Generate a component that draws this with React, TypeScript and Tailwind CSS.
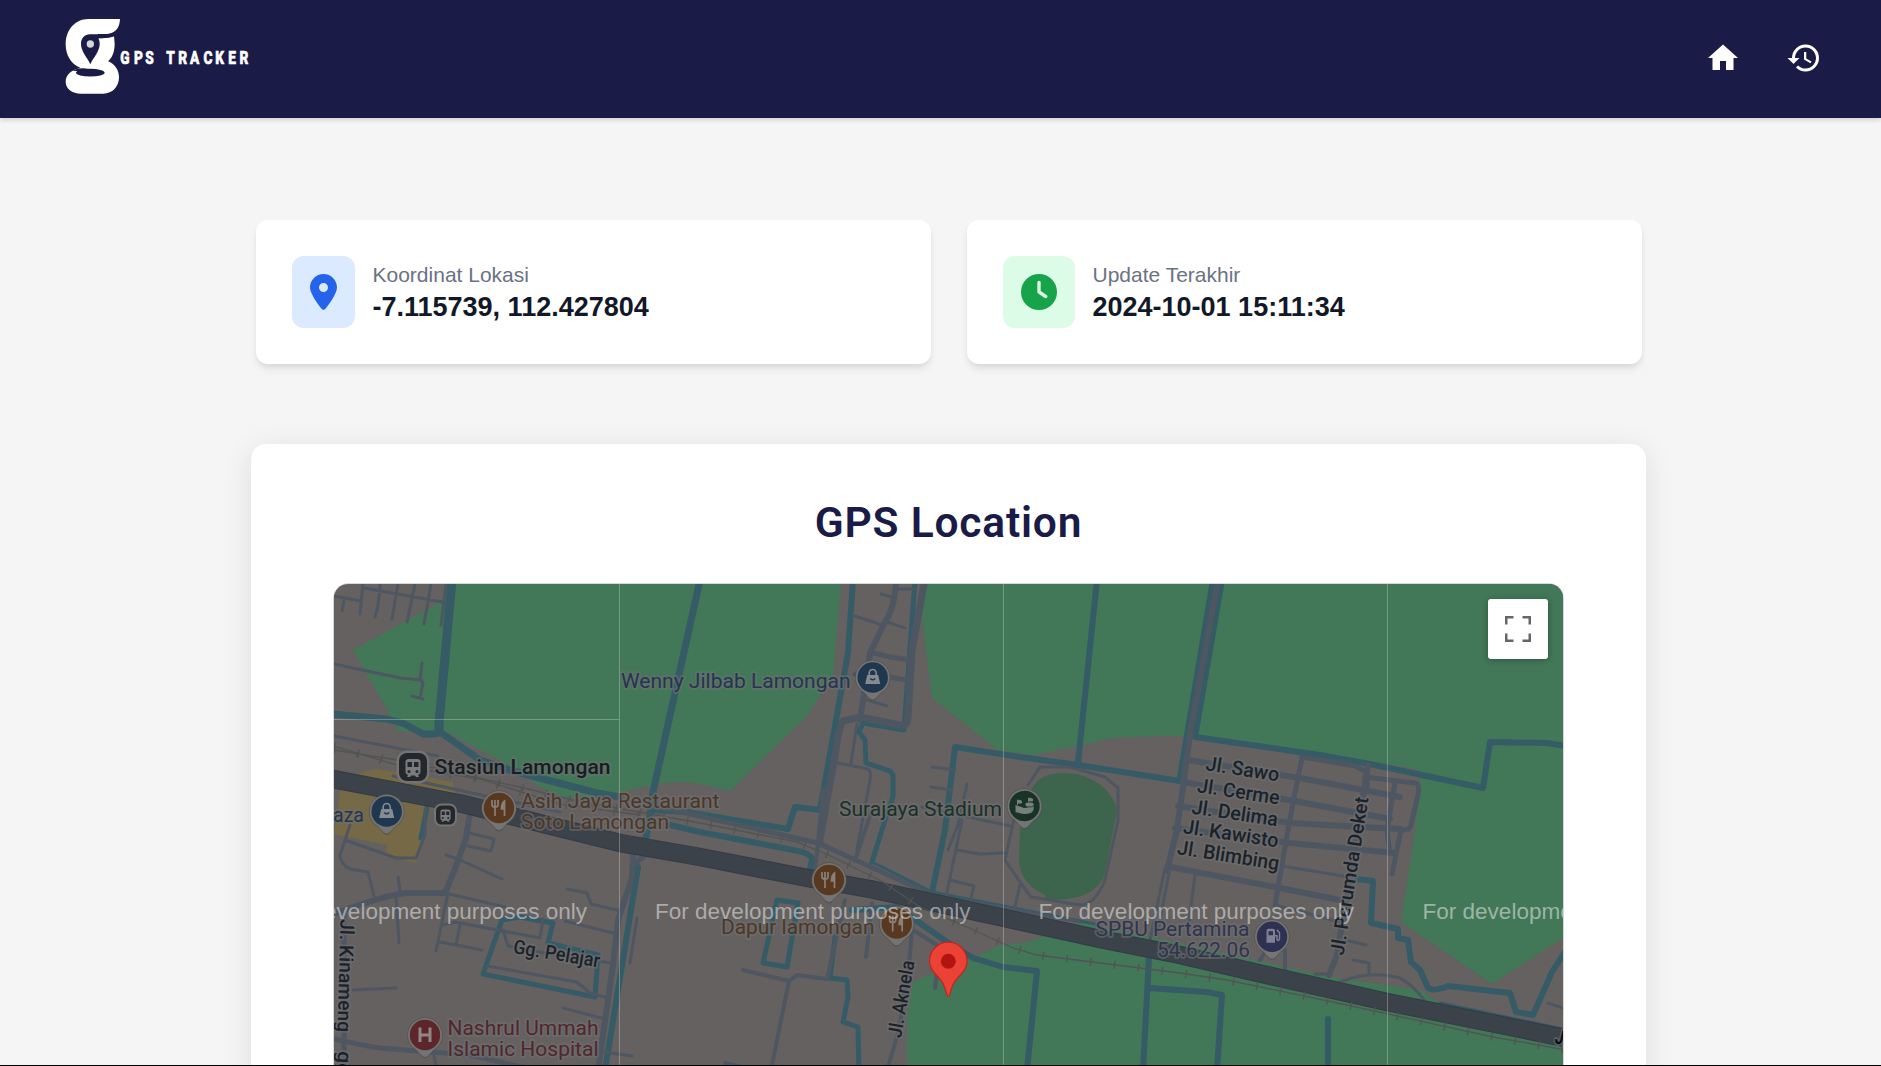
import React from "react";
import { MdHome, MdHistory } from "react-icons/md";
import { FaLocationDot, FaClock } from "react-icons/fa6";

const CANALS: [string, number][] = [
  ["M452 580L439 723V732", 9],
  ["M330 714L387 719L405 724L423 734H435L440 732L480 760L513 771L547 780L597 793L620 797", 7],
  ["M700 580L653 792L650 815L646 838", 7],
  ["M853 580L848 653L820 810L795 807L788 829L687 812L650 810", 6],
  ["M670 825L700 832L793 850Q812 853 812 860L809 874", 6],
  ["M915 580L904 730L863 723L859 732L865 740L866 763L890 771L893 775V797L885 820L872 862", 5],
  ["M932 892L945 830L955 747L1020 757L1078 765L1180 781", 6],
  ["M1097 580L1078 763", 6],
  ["M1213 580L1180 777", 6],
  ["M1222 580L1195 737L1320 755L1370 764L1417 774L1483 788L1490 742L1547 743L1566 746", 6],
  ["M638 867L605 1070", 6],
  ["M520 917L502 920L483 974L595 997L598 955L548 943L553 923L520 917", 5],
  ["M777 900L798 903L787 967L763 963Z", 5],
  ["M835 937L830 978L847 980L848 997L843 1022L858 1027L859 1070", 5],
  ["M852 910L897 907L947 942L973 958L1003 967L1037 971L1027 1070", 6],
  ["M1149 957L1143 1070M1149 988L1207 992L1222 995L1217 1070", 6],
  ["M1328 1019V1070", 6],
  ["M1357 879L1373 881L1371 923L1398 929V938L1408 940L1411 962L1420 970L1428 988Q1434 992 1448 986L1510 993L1516 1012L1533 1015L1552 972L1566 950", 6],
  ["M872 862L932 892L1100 925M1440 1003L1563 1029", 3],
  ["M427 808L421 838", 5],
];

const ROADS: [string, number][] = [
  ["M334 596L361 601M364 588L442 602M363 584L360 614M344 601L342 611M380 584Q380 600 375 617M398 584L392 619M415 584L407 622M431 584L424 624M446 584L441 625", 3],
  ["M334 664L400 678L422 680M422 663L420 680L423 683L420 698M412 696L423 699", 3],
  ["M334 736L438 756M393 776L440 786L560 812", 3],
  ["M896 584Q894 610 884 624L870 653L860 720", 6],
  ["M924 584L912 650L908 718Q907 727 900 725L860 717L843 721Q838 730 836 750L820 840L820 844", 7],
  ["M870 652L890 657L910 660M890 677L910 681M855 674L862 676", 5],
  ["M855 616L885 626M887 622L905 628M898 589H915M881 594L892 597M867 700L887 706", 3],
  ["M857 724L851 763M838 763L868 769Q872 773 870 780L857 850", 3],
  ["M1218 580L1190 735L1177 830L1167 870", 6],
  ["M1188 760L1300 778L1400 797M1183 782L1300 802L1390 819M1178 806L1290 823L1400 829M1175 828L1290 843L1395 853M1170 867L1280 888L1340 900", 6],
  ["M1302 758L1297 782L1288 830L1275 905", 5],
  ["M1302 757L1355 766L1367 772V790M1365 777L1415 783Q1420 784 1418 795L1411 825Q1411 830 1403 830M1395 783L1387 830L1390 853M1401 830L1392 874", 5],
  ["M1282 866L1343 876M1170 868L1157 935M1165 868L1150 940M1195 875L1188 930M1275 905L1340 922", 3],
  ["M1368 765L1337 955L1329 975", 6],
  ["M1340 982Q1370 970 1400 978Q1415 987 1424 1000M1353 960L1369 963V975M1315 974H1330M1345 940L1366 945M1548 1003L1563 1008", 3],
  ["M1016 810L1005 860L1020 882L1031 897L1080 905Q1095 905 1105 880L1118 820V788L1105 777L1070 767H1040L1028 785", 3],
  ["M922 807L1010 826M957 850L980 854L1004 853M962 820L946 897L1080 922M950 880L974 886L970 903M1020 885L1014 910", 3],
  ["M932 767L955 770M931 787L952 790M967 784L958 825L948 850", 3],
  ["M334 914Q390 893 410 893H445L455 869L466 838L470 813", 6],
  ["M445 893L505 907M448 893L436 951M398 877L400 890M396 896L399 943M443 925L455 922L540 938L543 919M460 925L456 945L440 942M456 945L482 950", 3],
  ["M350 825L340 855Q341 865 350 869L368 872L374 896M345 840L396 858H416L425 835V810", 3],
  ["M470 833L494 839L491 851L468 846M446 855L460 860L502 879M567 889L587 893L591 904L621 911M565 921L617 934M503 930L508 946L550 954L612 963", 3],
  ["M487 966L577 982L590 993L608 998M563 1008L605 1019M605 1052L632 1056M637 918L630 963M353 990L396 988", 3],
  ["M334 1039Q370 1047 380 1048L470 1055L535 1070", 5],
  ["M434 1056L437 1070", 3],
  ["M633 852L632 878L618 920L613 965L598 1070M645 855L633 865", 6],
  ["M650 805L818 843L860 862L932 895", 5],
  ["M818 844L815 870M823 790L818 844M872 810L855 860", 4],
  ["M743 970L789 981L771 1070M789 981L797 975L827 979L845 900M725 1063L755 1070M872 903L866 957", 4],
  ["M913 920L909 965L899 1030L887 1070M913 930L940 947L935 988M1260 960L1270 945L1285 950V970", 4],
  ["M344 910V1070", 5],
];

const RAILS = [
  "M334 750L397 760L520 787L573 800L700 823L797 842L833 857L883 882L920 907L967 927L1013 948L1037 955L1100 963L1180 973L1227 980L1347 1005L1493 1037L1566 1050",
  "M334 746L400 766L480 779L560 804L640 815",
];

const WATERMARK_X = [271.5, 655, 1038.5, 1422.5];

function Label({
  x, y, w, children, color = "#1d2228", size = 21, angle = 0, weight = 500,
}: {
  x: number; y: number; w: number; children: string; color?: string; size?: number; angle?: number; weight?: number;
}) {
  return (
    <text
      x={x} y={y} textLength={w} lengthAdjust="spacingAndGlyphs" fontSize={size} fontWeight={weight}
      fill={color} stroke="#6d7072" strokeOpacity={0.65} strokeWidth={3.5} strokeLinejoin="round" paintOrder="stroke"
      transform={`rotate(${angle} ${x} ${y})`}
    >
      {children}
    </text>
  );
}

function Pin({ x, y, color, children }: { x: number; y: number; color: string; children: React.ReactNode }) {
  return (
    <g transform={`translate(${x} ${y})`}>
      <path d="M0 23.5C-3 23.5-5 19-9 15.5A17.8 17.8 0 1 1 9 15.5C5 19 3 23.5 0 23.5Z" fill="#4c4c4c" opacity=".6" />
      <path d="M0 22C-3 22-5 18-9 14.500A17 17 0 1 1 9 14.500C5 18 3 22 0 22Z" fill="#747474" />
      <circle r="15.200" fill={color} />
      {children}
    </g>
  );
}

const Bag = () => (
  <g>
    <path d="M-5.500-2.500H5.500L7.500 6.500H-7.500Z" fill="#858b90" />
    <path d="M-3.500-2V-4.500a3.500 3.500 0 0 1 7 0V-2" fill="none" stroke="#858b90" strokeWidth="1.600" />
    <path d="M-2.500 1Q0 3.500 2.500 1" fill="none" stroke="#1f3850" strokeWidth="1.400" />
  </g>
);

const Food = () => (
  <g fill="none" stroke="#8a8079" strokeWidth="1.700">
    <path d="M-7-8V-3Q-7-1-4-1Q-1-1-1-3V-8M-4-8V8" />
    <path d="M5.500 8V-7Q2.500-5 2.500 1H5" fill="#8a8079" />
  </g>
);

function TrainGlyph() {
  return (
    <g>
      <path d="M-7.500-5Q-7.500-8-4-8H4Q7.500-8 7.500-5V5Q7.500 7 5 8L6 10H3L2 8.500H-2L-3 10H-6L-5 8Q-7.500 7-7.500 5Z" fill="#7a7b7c" />
      <path d="M-5.500-5H-1V0H-5.500ZM1-5H5.500V0H1Z" fill="#24282c" />
      <circle cx="-4" cy="4.500" r="1.500" fill="#24282c" />
      <circle cx="4" cy="4.500" r="1.500" fill="#24282c" />
    </g>
  );
}

function MapCanvas() {
  return (
    <svg viewBox="334 584 1229 482" className="block h-[482px] w-[1229px] font-['Roboto',sans-serif]">
      <rect x="334" y="584" width="1229" height="482" fill="#656160" />
      <g fill="#427757">
        <path d="M445 584L441 602L353 650L392 718L398 731L448 733L453 735L512 767L540 787L563 797L597 798L620 792L663 783L690 782L730 791L808 715L815 703L833 677L841 584Z" />
        <path d="M926 584L922 617L932 698L998 750L1033 755L1083 745L1113 738L1160 736L1197 736L1320 753L1417 769L1420 778L1415 830L1401 922L1492 984L1563 938V584Z" />
        <path d="M907 1066V1017L913 982L933 973L977 956L1000 945L1023 943L1045 936L1080 922L1180 943L1330 977L1420 990L1440 1003L1563 1035V1066Z" />
      </g>
      <path d="M1063 773Q1040 773 1032 788L1020 830L1019 862Q1021 884 1045 895V900L1068 899Q1098 895 1105 873L1117 810Q1110 783 1077 774Z" fill="#3d654d" />
      <path d="M353 777Q365 770 377 769L453 782V797L430 810L420 850L416 863L386 856L387 845L334 834L341 785Z" fill="#766945" />
      <g fill="none" strokeLinecap="round" strokeLinejoin="round">
        {CANALS.map(([d, w]) => (
          <path key={d} d={d} stroke="#355b67" strokeWidth={w} />
        ))}
        {ROADS.map(([d, w]) => (
          <path key={d} d={d} stroke="#4e5761" strokeWidth={w} />
        ))}
      </g>
      <path
        d="M325 777.500L463 804L620 843L700 857L813 879L870 889L1000 917L1100 939L1180 955L1280 978L1387 1002L1570 1039"
        fill="none" stroke="#333b44" strokeWidth="18.500"
      />
      <path
        d="M325 777.500L463 804L620 843L700 857L813 879L870 889L1000 917L1100 939L1180 955L1280 978L1387 1002L1570 1039"
        fill="none" stroke="#3b4249" strokeWidth="16.500"
      />
      <g fill="none" stroke="#525454">
        {RAILS.map((d) => (
          <g key={d}>
            <path d={d} strokeWidth="1.300" />
            <path d={d} strokeWidth="8" strokeDasharray="1.300 22.700" />
          </g>
        ))}
      </g>

      <g transform="translate(413 767)">
        <rect x="-16.500" y="-16.500" width="33" height="33" rx="11" fill="#747474" />
        <rect x="-14" y="-14" width="28" height="28" rx="8" fill="#24282c" />
        <TrainGlyph />
      </g>
      <g transform="translate(445.500 815)">
        <rect x="-11.500" y="-11.500" width="23" height="23" rx="7.500" fill="#747474" />
        <rect x="-9.500" y="-9.500" width="19" height="19" rx="5.500" fill="#24282c" />
        <g transform="scale(.68)"><TrainGlyph /></g>
      </g>

      <Label x={434.5} y={774} w={176} color="#191d22">Stasiun Lamongan</Label>
      <Label x={621} y={688} w={229.500} color="#25354f" weight={400}>Wenny Jilbab Lamongan</Label>
      <Label x={521} y={807.500} w={198.500} color="#4e3625" weight={400}>Asih Jaya Restaurant</Label>
      <Label x={521} y={828.500} w={148} color="#4e3625" weight={400}>Soto Lamongan</Label>
      <Label x={333} y={822} w={31} color="#25354f" weight={400}>aza</Label>
      <Label x={839} y={816} w={163} color="#1c3027" weight={400}>Surajaya Stadium</Label>
      <Label x={721} y={934} w={153.500} color="#4e3625" weight={400}>Dapur lamongan</Label>
      <Label x={1095.5} y={936} w={154} color="#30344f" weight={400}>SPBU Pertamina</Label>
      <Label x={1157} y={957} w={93} color="#30344f" weight={400}>54.622.06</Label>
      <Label x={447.5} y={1035} w={151} color="#52262c" weight={400}>Nashrul Ummah</Label>
      <Label x={447.5} y={1056} w={151} color="#52262c" weight={400}>Islamic Hospital</Label>
      <Label x={512.5} y={953} w={87.500} size={19.5} angle={9.5}>Gg. Pelajar</Label>
      <Label x={340.5} y={919} w={113} size={19.5} angle={91.5}>Jl. Kinameng</Label>
      <Label x={338} y={1051} w={24} size={19.5} angle={92}>gg</Label>
      <Label x={901} y={1038.5} w={78} size={19.5} angle={-80}>Jl. Aknela</Label>
      <Label x={1343.5} y={956} w={160} size={19.5} angle={-81}>Jl. Perumda Deket</Label>
      <Label x={1205} y={770} w={74} size={20} angle={9}>Jl. Sawo</Label>
      <Label x={1196.5} y={792} w={83} size={20} angle={8.7}>Jl. Cerme</Label>
      <Label x={1191} y={813.500} w={87} size={20} angle={8.5}>Jl. Delima</Label>
      <Label x={1182.5} y={833} w={96} size={20} angle={8.7}>Jl. Kawisto</Label>
      <Label x={1176.5} y={854} w={103} size={20} angle={9}>Jl. Blimbing</Label>
      <Label x={1554} y={1043} w={17} size={20} angle={13} color="#0b0d0f" weight={700}>Jl.</Label>

      <Pin x={872.7} y={677.500} color="#1f3850"><Bag /></Pin>
      <Pin x={386.7} y={811.500} color="#1f3850"><Bag /></Pin>
      <Pin x={499} y={808} color="#593820"><Food /></Pin>
      <Pin x={829} y={880} color="#593820"><Food /></Pin>
      <Pin x={896.7} y={923.500} color="#593820"><Food /></Pin>
      <Pin x={1024.5} y={806} color="#1a3329">
        <path d="M-9-1L-3 1Q0 3 4 1L9 0Q10 5 6 7Q0 9-5 7L-9 6Z" fill="#77817c" />
        <path d="M-7-1V-6L-3-5V-3H-7M4-4V-8L8-7V-5H4" fill="#77817c" stroke="#77817c" />
        <ellipse cx="5" cy="-1.500" rx="4.500" ry="2.500" fill="#77817c" stroke="#1a3329" strokeWidth=".8" />
      </Pin>
      <Pin x={1272} y={936.700} color="#2f3152">
        <path d="M-5.500 6V-6Q-5.500-8-3.500-8H1Q3-8 3-6V6Z" fill="#7f8090" />
        <path d="M-3.500-5.500H1V-1.500H-3.500Z" fill="#2f3152" />
        <path d="M3-1H5V3Q7 5 7.500 2V-4L5-7" fill="none" stroke="#7f8090" strokeWidth="1.400" />
      </Pin>
      <Pin x={425} y={1035} color="#5e262a">
        <path d="M-5-7.500V7M5-7.500V7M-5 0H5" fill="none" stroke="#8f8686" strokeWidth="3" />
      </Pin>

      <g stroke="#ffffff" strokeOpacity=".27">
        <path d="M619.500 584V1066M1003.500 584V1066M1387.500 584V1066M334 719.500H619" />
      </g>
      <g fill="#ffffff" fillOpacity=".48" className="font-['Liberation_Sans',Arial,sans-serif]" fontSize="22.500">
        {WATERMARK_X.map((x) => (
          <text key={x} x={x} y="919" textLength="315.500" lengthAdjust="spacingAndGlyphs">
            For development purposes only
          </text>
        ))}
      </g>

      <path
        d="M948.300 996.500C946.500 996.500 946 989 943 983.500C939 976 929.500 971.500 929.500 961A18.800 18.800 0 1 1 967.100 961C967.100 971.500 957.600 976 953.600 983.500C950.600 989 950.100 996.500 948.300 996.500Z"
        fill="#ea4335" stroke="#c5221f" strokeWidth="1.200"
      />
      <circle cx="948.300" cy="961.300" r="7.500" fill="#b31412" />
    </svg>
  );
}

function Logo() {
  return (
    <svg viewBox="0 0 660 354" className="h-[118px] w-[220px]" fill="#fff">
      <path d="M240 57H145C105 57 77 90 77 132C77 166 93 192 122 204C95 209 77 224 77 245C77 265 95 281 124 281H190C217 281 237 260 237 232C237 210 224 191 204 184C218 172 224 153 224 132L222 108Q208 115 172 115L174 102H200C225 102 239 84 240 57Z" />
      <path d="M151 193C142 172 123 155 123 131C123 114 134 103 150 102.500H202Q220 100 232 87L224 108Q212 114 175 115Q179 122 179 131C179 155 160 172 151 193Z" fill="#1a1b47" />
      <circle cx="151" cy="132" r="11" fill="#d6d6d6" />
      <ellipse cx="151" cy="218" rx="43" ry="11.500" fill="#1a1b47" />
      <path d="M98 212Q112 204 132 205L150 208L115 214Z" fill="#1a1b47" />
      <g transform="scale(.76 1)">
        <text
          y="191" fontSize="54" fontWeight="800" stroke="#fff" strokeWidth="2"
          x="317 371 416 470 498 546 592 645 692 743 788"
          className="font-['Roboto',sans-serif]"
        >
          GPS TRACKER
        </text>
      </g>
    </svg>
  );
}

function InfoCard({ icon, tone, label, value }: { icon: React.ReactNode; tone: string; label: string; value: string }) {
  return (
    <div className="flex h-36 w-[675px] items-center gap-[17.500px] rounded-xl bg-white px-9 shadow-[0_6px_9px_-1px_rgba(0,0,0,0.08),0_3px_6px_-2px_rgba(0,0,0,0.08)]">
      <div className={`rounded-xl p-[18px] ${tone}`}>{icon}</div>
      <div>
        <p className="text-[21px] leading-[30px] text-gray-500">{label}</p>
        <p className="text-[27px] leading-[35px] font-bold text-[#111827]">{value}</p>
      </div>
    </div>
  );
}

export default function App() {
  return (
    <div className="h-[1066px] w-[1881px] overflow-hidden bg-black font-['Liberation_Sans',Arial,sans-serif]">
      <div className="h-[1065px] overflow-hidden bg-[#f5f5f5]">
        <header className="relative flex h-[118px] items-center justify-between bg-[#1a1b47] pr-[59px] pl-10 shadow-[0_2px_5px_rgba(0,0,0,0.15)]">
          <Logo />
          <nav className="flex gap-[45px] pb-[2px] text-white">
            <MdHome size={36} />
            <MdHistory size={36} />
          </nav>
        </header>

        <main className="pt-[102px]">
          <section className="flex gap-9 pl-64">
            <InfoCard
              tone="bg-[#dbeafe]"
              icon={<FaLocationDot className="h-9 w-[27px] text-[#2563eb]" />}
              label="Koordinat Lokasi"
              value="-7.115739, 112.427804"
            />
            <InfoCard
              tone="bg-[#dcfce7]"
              icon={<FaClock className="size-9 text-[#16a34a]" />}
              label="Update Terakhir"
              value="2024-10-01 15:11:34"
            />
          </section>

          <section className="mt-20 ml-[251px] h-[700px] w-[1395px] rounded-[15px] bg-white pt-[47px] shadow-[0_6px_30px_rgba(0,0,0,0.1)]">
            <h1 className="text-center font-['Roboto',sans-serif] text-[42.500px] leading-[64px] font-semibold tracking-[0.800px] text-[#1a1b47]">
              GPS Location
            </h1>
            <div className="relative mt-[28px] ml-[82px] w-[1231px] overflow-hidden rounded-t-[15px] border border-[#d8d8d8]">
              <MapCanvas />
              <button className="absolute top-[15px] right-[15px] flex size-[60px] items-center justify-center rounded-[3px] bg-white shadow-[0_1px_6px_rgba(0,0,0,0.3)]">
                <svg viewBox="0 0 26 26" className="size-[26px]" fill="none" stroke="#666" strokeWidth="2.500">
                  <path d="M1.250 8.500V1.250H8.500M17.500 1.250H24.750V8.500M24.750 17.500V24.750H17.500M8.500 24.750H1.250V17.500" />
                </svg>
              </button>
            </div>
          </section>
        </main>
      </div>
    </div>
  );
}
